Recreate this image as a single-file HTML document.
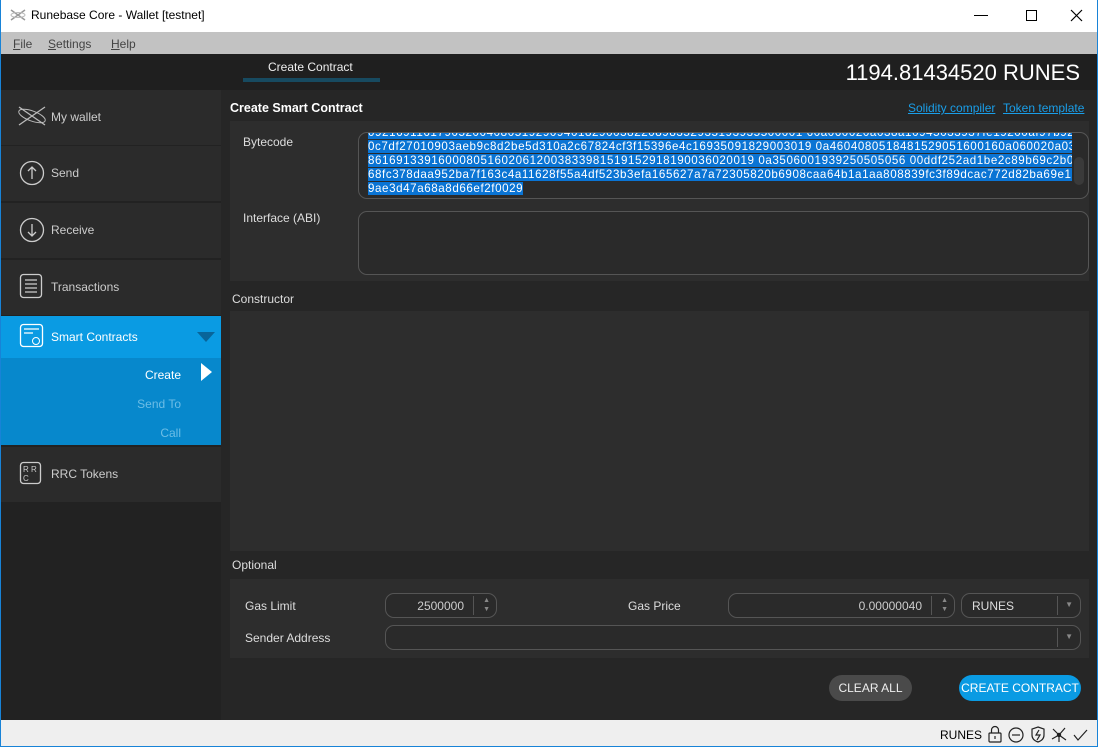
<!DOCTYPE html>
<html><head><meta charset="utf-8"><style>
*{box-sizing:border-box;margin:0;padding:0}
body{width:1098px;height:754px;overflow:hidden;background:#fff;font-family:"Liberation Sans",sans-serif;font-size:12px;color:#ddd;position:relative}
.a{position:absolute}
.win{left:0;top:0;width:1098px;height:754px;border:1px solid #1883d7;border-bottom:none}
.title{left:1px;top:0;width:1096px;height:32px;background:#fff;color:#000;font-size:12px}
.menu{left:1px;top:32px;width:1096px;height:22px;background:#c2c2c2;color:#444}
.top{left:1px;top:54px;width:1096px;height:36px;background:#1f1f1f}
.side{left:1px;top:90px;width:220px;height:630px;background:#222}
.item{position:absolute;left:0;width:220px;height:55px;background:#2b2b2b;color:#ccc;font-size:12px}
.item span{position:absolute;left:50px;top:20px}
.main{left:221px;top:90px;width:876px;height:630px;background:#262626}
.panel{position:absolute;background:#2d2d2d}
.inp{position:absolute;border:1px solid #555;border-radius:9px;background:#2a2a2a}
.lbl{position:absolute;color:#ddd;font-size:12px}
.status{left:1px;top:720px;width:1096px;height:26px;background:#efefef;color:#000}
.bc div{white-space:nowrap;height:14px}
.bc span{background:#0a74d4}
</style></head><body>
<div class="a win"></div>
<div class="a title">
<svg class="a" style="left:9px;top:9px" width="16" height="12" viewBox="0 0 16 12"><path d="M1 1L15 11M15 1L1 11" stroke="#999" stroke-width="1.5" fill="none"/><ellipse cx="8" cy="6" rx="7" ry="2.5" stroke="#bbb" fill="none"/></svg>
<span class="a" style="left:30px;top:8px">Runebase Core - Wallet [testnet]</span>
<div class="a" style="left:973px;top:15px;width:14px;height:1px;background:#000"></div>
<div class="a" style="left:1025px;top:10px;width:11px;height:11px;border:1px solid #000"></div>
<svg class="a" style="left:1069px;top:9px" width="13" height="13"><path d="M1 1L12 12M12 1L1 12" stroke="#000" stroke-width="1.2"/></svg>
</div>
<div class="a menu"><span class="a" style="left:12px;top:5px"><u>F</u>ile</span><span class="a" style="left:47px;top:5px"><u>S</u>ettings</span><span class="a" style="left:110px;top:5px"><u>H</u>elp</span></div>
<div class="a top">
<span class="a" style="left:267px;top:6px;color:#eee">Create Contract</span>
<div class="a" style="left:242px;top:24px;width:137px;height:4px;background:#174a60"></div>
<span class="a" style="right:17px;top:6px;font-size:22px;color:#fff">1194.81434520 RUNES</span>
</div>
<div class="a side">
<div class="item" style="top:0"><svg class="a" style="left:16px;top:15px" width="30" height="22" viewBox="0 0 30 22"><path d="M2 2L28 20M28 2L2 20" stroke="#bbb" stroke-width="1.3" fill="none"/><ellipse cx="15" cy="11" rx="14" ry="5" stroke="#bbb" fill="none" transform="rotate(20 15 11)"/></svg><span style="top:20px">My wallet</span></div>
<div class="item" style="top:56px"><svg class="a" style="left:18px;top:14px" width="26" height="26"><circle cx="13" cy="13" r="11.5" stroke="#ccc" fill="none" stroke-width="1.3"/><path d="M13 19V7M9 11L13 7L17 11" stroke="#ccc" fill="none" stroke-width="1.3"/></svg><span>Send</span></div>
<div class="item" style="top:113px"><svg class="a" style="left:18px;top:14px" width="26" height="26"><circle cx="13" cy="13" r="11.5" stroke="#ccc" fill="none" stroke-width="1.3"/><path d="M13 7V19M9 15L13 19L17 15" stroke="#ccc" fill="none" stroke-width="1.3"/></svg><span>Receive</span></div>
<div class="item" style="top:170px"><svg class="a" style="left:18px;top:13px" width="26" height="28"><rect x="1.5" y="1.5" width="21" height="23" rx="3" stroke="#ccc" fill="none" stroke-width="1.3"/><path d="M6 7H18M6 11H18M6 15H18M6 19H18" stroke="#ccc" stroke-width="1.3"/></svg><span>Transactions</span></div>
<div class="a" style="left:0;top:226px;width:220px;height:42px;background:#0a9be3"><svg class="a" style="left:18px;top:7px" width="26" height="26"><rect x="1.5" y="1.5" width="22" height="22" rx="3" stroke="#fff" fill="none" stroke-width="1.3"/><path d="M5 6H20M5 10H14" stroke="#fff" stroke-width="1.3"/><circle cx="17" cy="18" r="3.5" stroke="#fff" fill="none"/></svg><span class="a" style="left:50px;top:14px;color:#fff">Smart Contracts</span><div class="a" style="left:196px;top:16px;width:0;height:0;border-left:9px solid transparent;border-right:9px solid transparent;border-top:10px solid #08659a"></div></div>
<div class="a" style="left:0;top:268px;width:220px;height:87px;background:#0788cc">
<span class="a" style="right:40px;top:10px;color:#fff">Create</span>
<div class="a" style="left:200px;top:5px;border-top:9px solid transparent;border-bottom:9px solid transparent;border-left:11px solid #fff"></div>
<span class="a" style="right:40px;top:39px;color:#6cbde6">Send To</span>
<span class="a" style="right:40px;top:68px;color:#6cbde6">Call</span></div>
<div class="item" style="top:357px"><svg class="a" style="left:18px;top:14px" width="26" height="26"><rect x="1.5" y="1.5" width="20" height="21" rx="3" stroke="#ccc" fill="none" stroke-width="1.3"/><text x="4" y="11" font-size="8" fill="#ccc" font-family="Liberation Sans">R R</text><text x="4" y="20" font-size="8" fill="#ccc" font-family="Liberation Sans">C</text></svg><span>RRC Tokens</span></div>
</div>
<div class="a main">
<span class="a" style="left:9px;top:11px;font-weight:bold;color:#fff;font-size:12.5px">Create Smart Contract</span>
<span class="a" style="left:687px;top:11px;color:#1a9ee8;text-decoration:underline">Solidity compiler</span>
<span class="a" style="left:782px;top:11px;color:#1a9ee8;text-decoration:underline">Token template</span>
<div class="panel" style="left:9px;top:31px;width:859px;height:160px"></div>
<span class="lbl" style="left:22px;top:45px">Bytecode</span>
<div class="inp" style="left:137px;top:42px;width:731px;height:67px;overflow:hidden">
<div class="bc" style="position:absolute;left:9px;top:-7px;width:704px;overflow:hidden;font-size:11.6px;line-height:14px;color:#fff;letter-spacing:0.58px">
<div><span>09216911617905200408051929094018290038220898352935193935500001 60a060020a038a10945033937fe19200af97b920</span></div>
<div><span>0c7df27010903aeb9c8d2be5d310a2c67824cf3f15396e4c16935091829003019 0a4604080518481529051600160a060020a03</span></div>
<div><span>8616913391600080516020612003833981519152918190036020019 0a3506001939250505056 00ddf252ad1be2c89b69c2b0</span></div>
<div><span>68fc378daa952ba7f163c4a11628f55a4df523b3efa165627a7a72305820b6908caa64b1a1aa808839fc3f89dcac772d82ba69e1a</span></div>
<div><span>9ae3d47a68a8d66ef2f0029</span></div>
</div>
<div class="a" style="right:4px;top:24px;width:10px;height:28px;background:#3a3a3a;border-radius:5px"></div>
</div>
<span class="lbl" style="left:22px;top:121px">Interface (ABI)</span>
<div class="inp" style="left:137px;top:121px;width:731px;height:64px"></div>
<span class="lbl" style="left:11px;top:202px">Constructor</span>
<div class="panel" style="left:9px;top:221px;width:859px;height:240px"></div>
<span class="lbl" style="left:11px;top:468px">Optional</span>
<div class="panel" style="left:9px;top:489px;width:859px;height:79px"></div>
<span class="lbl" style="left:24px;top:509px">Gas Limit</span>
<div class="inp" style="left:164px;top:503px;width:112px;height:25px"><span class="a" style="right:32px;top:5px;color:#ccc">2500000</span><div class="a" style="right:22px;top:2px;width:1px;height:19px;background:#555"></div><span class="a" style="right:6px;top:2px;font-size:7px;color:#888;line-height:9px">▲<br>▼</span></div>
<span class="lbl" style="left:407px;top:509px">Gas Price</span>
<div class="inp" style="left:507px;top:503px;width:227px;height:25px"><span class="a" style="right:32px;top:5px;color:#ccc">0.00000040</span><div class="a" style="right:22px;top:2px;width:1px;height:19px;background:#555"></div><span class="a" style="right:6px;top:2px;font-size:7px;color:#888;line-height:9px">▲<br>▼</span></div>
<div class="inp" style="left:740px;top:503px;width:120px;height:25px"><span class="a" style="left:10px;top:5px;color:#ddd">RUNES</span><div class="a" style="right:22px;top:2px;width:1px;height:19px;background:#555"></div><span class="a" style="right:7px;top:6px;font-size:8px;color:#888">▼</span></div>
<span class="lbl" style="left:24px;top:541px">Sender Address</span>
<div class="inp" style="left:164px;top:535px;width:696px;height:25px"><div class="a" style="right:22px;top:2px;width:1px;height:19px;background:#555"></div><span class="a" style="right:7px;top:6px;font-size:8px;color:#888">▼</span></div>
<div class="a" style="left:608px;top:585px;width:83px;height:26px;border-radius:13px;background:#4a4a4a;color:#eee;text-align:center;line-height:26px">CLEAR ALL</div>
<div class="a" style="left:738px;top:585px;width:122px;height:26px;border-radius:13px;background:#0a9be3;color:#fff;text-align:center;line-height:26px">CREATE CONTRACT</div>
</div>
<div class="a status"><span class="a" style="left:939px;top:8px">RUNES</span>
<svg class="a" style="left:986px;top:4px" width="104" height="20" fill="none" stroke="#222" stroke-width="1.2">
<rect x="2" y="9" width="12" height="9" rx="1"/><path d="M4.5 9V6a3.5 3.5 0 0 1 7 0v3M8 12v3"/>
<circle cx="29" cy="11" r="7"/><path d="M25 11h8"/>
<path d="M51 3l6 2v6c0 4-3 6-6 7c-3-1-6-3-6-7V5z"/><path d="M52 6l-3 5h4l-3 5"/>
<path d="M72 11l-6-6M72 11l6-7M72 11l-7 4M72 11l7 5M72 11l0 7"/><circle cx="72" cy="11" r="1.6" fill="#222"/>
<path d="M87 11l4 5l9-10"/></svg></div>
<div class="a" style="left:0;top:746px;width:1098px;height:8px;background:#fff;border-top:1px solid #1883d7"></div>
</body></html>
